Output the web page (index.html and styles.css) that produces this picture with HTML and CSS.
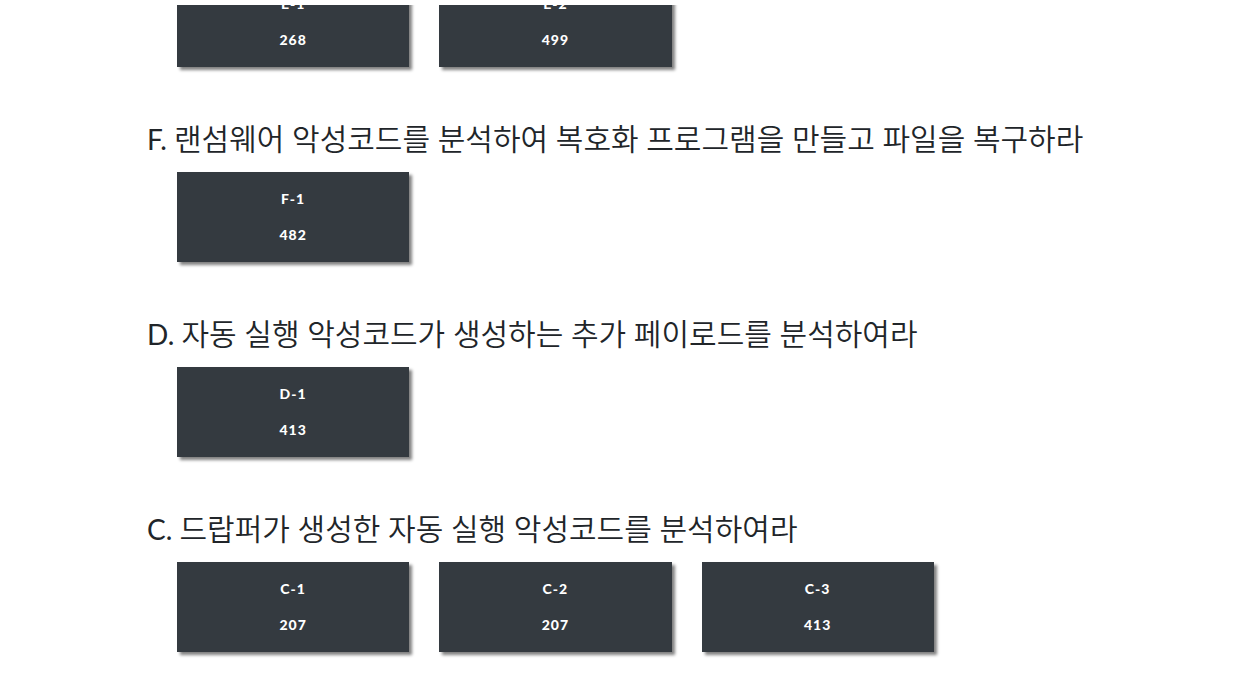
FILE: index.html
```html
<!DOCTYPE html>
<html lang="ko">
<head>
<meta charset="utf-8">
<meta name="viewport" content="width=device-width, initial-scale=1">
<title>Challenges</title>
<link rel="stylesheet" href="styles.css">
</head>
<body>
<main class="board">
  <section class="category category-scrolled">
    <div class="challenges">
      <button class="challenge" type="button"><span>E-1</span><span>268</span></button>
      <button class="challenge" type="button"><span>E-2</span><span>499</span></button>
    </div>
  </section>
  <section class="category">
    <h3 class="category-title"><span class="letter">F. </span>랜섬웨어 악성코드를 분석하여 복호화 프로그램을 만들고 파일을 복구하라</h3>
    <div class="challenges">
      <button class="challenge" type="button"><span>F-1</span><span>482</span></button>
    </div>
  </section>
  <section class="category">
    <h3 class="category-title"><span class="letter">D. </span>자동 실행 악성코드가 생성하는 추가 페이로드를 분석하여라</h3>
    <div class="challenges">
      <button class="challenge" type="button"><span>D-1</span><span>413</span></button>
    </div>
  </section>
  <section class="category">
    <h3 class="category-title"><span class="letter">C. </span>드랍퍼가 생성한 자동 실행 악성코드를 분석하여라</h3>
    <div class="challenges">
      <button class="challenge" type="button"><span>C-1</span><span>207</span></button>
      <button class="challenge" type="button"><span>C-2</span><span>207</span></button>
      <button class="challenge" type="button"><span>C-3</span><span>413</span></button>
    </div>
  </section>
</main>
</body>
</html>
```
FILE: styles.css
```css
* {
  box-sizing: border-box;
}

body {
  margin: 0;
  padding-top: 5px;
  background: #fff;
  color: #212529;
  font-family: Lato, "Noto Sans CJK KR", sans-serif;
}

.board {
  display: flow-root;
  overflow: hidden;
  padding: 0 51px 0 147px;
}

.category {
  margin-bottom: 55px;
}

.category:last-child {
  margin-bottom: 20px;
}

/* The first row is partly scrolled out of view. */
.category-scrolled {
  margin-top: -28px;
}

.category-title {
  margin: 0 0 17px;
  font-family: Lato, "Noto Sans CJK KR DemiLight", "Noto Sans CJK KR", sans-serif;
  font-size: 30px;
  font-weight: 400;
  line-height: 32px;
  height: 33px;
  white-space: nowrap;
}

.letter {
  font-size: 28px;
}

.challenges {
  display: grid;
  grid-template-columns: repeat(4, 1fr);
  gap: 30px;
  padding-left: 30px;
}

.challenge {
  display: flex;
  flex-direction: column;
  align-items: center;
  gap: 16px;
  padding: 17px 12px;
  border: 0;
  background: #343a40;
  box-shadow: 3px 3px 3px grey;
  color: #fff;
  font: 900 14px/20px Lato, sans-serif;
  letter-spacing: 1px;
  cursor: pointer;
}
```
